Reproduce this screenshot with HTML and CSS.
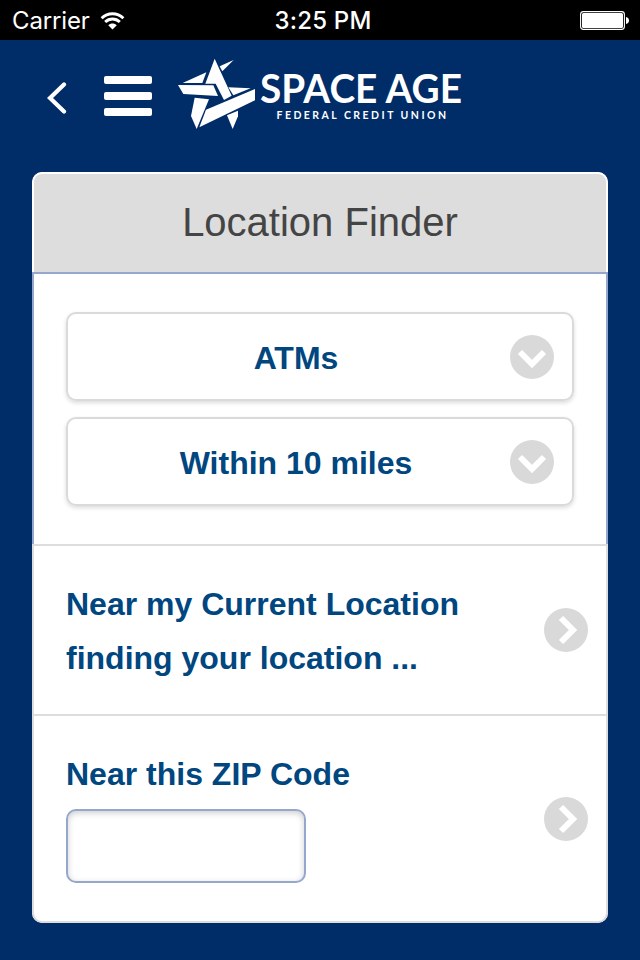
FILE: index.html
```html
<!DOCTYPE html>
<html lang="en">
<head>
<meta charset="utf-8">
<title>Location Finder</title>
<link rel="stylesheet" href="styles.css">
</head>
<body>
<div class="status">
  <div class="carrier"><span>Carrier</span>
    <svg class="wifi" width="25" height="20" viewBox="0 0 26 20" fill="none" stroke="#fff" stroke-width="3.1">
      <path d="M1.7 7.2C8.1 .9 17.9 .9 24.3 7.2M5.4 11.1C9.700 6.900 16.300 6.900 20.600 11.100"/>
      <path d="M8.600 14.300C11 12 15 12 17.400 14.300L13 18.800Z" fill="#fff" stroke="none"/>
    </svg>
  </div>
  <time class="clock">3:25 PM</time>
  <svg class="battery" width="50" height="20" viewBox="0 0 50 20">
    <rect x=".6" y=".6" width="43.8" height="17.8" rx="2.8" fill="none" stroke="#fff" stroke-width="1.1"/>
    <rect x="2" y="2" width="41" height="15" rx="1.5" fill="#fff"/>
    <path d="M46 6C50 6.500 50 12.500 46 13Z" fill="#fff"/>
  </svg>
</div>
<header class="topbar">
  <svg class="back" width="20" height="34" viewBox="0 0 20 34" fill="none" stroke="#fff" stroke-width="4.2" stroke-linecap="round"><path d="M17 3.500L3 17L17 30.500" stroke-linejoin="miter"/></svg>
  <div class="menu"><i></i><i></i><i></i></div>
  <svg class="logo" width="320" height="90" viewBox="0 0 320 90" fill="#fff">
    <g transform="scale(.33333)">
      <path d="M38 99L109 67L97 99Z"/>
      <path d="M24 105L130 106L144 138L40 132Z"/>
      <path d="M106 101L134 26L185 137L162 150L137 101Z"/>
      <path d="M149 49L191 30L157 64Z"/>
      <path d="M175 112L242 115L190 136Z"/>
      <path d="M74 143L117 148L80 237L63 198Z"/>
      <path d="M255 117V151L88 232L108 179Z"/>
      <path d="M171 196L204 182L204 199L188 237Z"/>
    </g>
    <text class="brand" x="90" y="53" textLength="202" lengthAdjust="spacingAndGlyphs">SPACE AGE</text>
    <text class="tagline" x="106.500" y="69" textLength="169.500">FEDERAL CREDIT UNION</text>
  </svg>
</header>
<main class="card">
  <h1 class="title">Location Finder</h1>
  <section class="filters">
    <div class="select"><span>ATMs</span>
      <svg class="disc" viewBox="0 0 44 44"><circle cx="22" cy="22" r="22"/><path d="M10 17L22 29L34 17"/></svg>
    </div>
    <div class="select"><span>Within 10 miles</span>
      <svg class="disc" viewBox="0 0 44 44"><circle cx="22" cy="22" r="22"/><path d="M10 17L22 29L34 17"/></svg>
    </div>
  </section>
  <section class="row near">
    <div class="label"><div>Near my Current Location</div><div>finding your location ...</div></div>
    <svg class="disc" viewBox="0 0 44 44"><circle cx="22" cy="22" r="22"/><path d="M17 10L29 22L17 34"/></svg>
  </section>
  <section class="row zip">
    <div class="label"><label for="zip">Near this ZIP Code</label><input id="zip" type="text"></div>
    <svg class="disc" viewBox="0 0 44 44"><circle cx="22" cy="22" r="22"/><path d="M17 10L29 22L17 34"/></svg>
  </section>
</main>
</body>
</html>
```
FILE: styles.css
```css
* { box-sizing: border-box; }
body {
  margin: 0;
  height: 960px;
  background: #002c68;
  font-family: "Liberation Sans", Arial, sans-serif;
  overflow: hidden;
}
svg { display: block; flex: none; }
.status {
  height: 40px;
  background: #000;
  color: #fff;
  display: grid;
  grid-template-columns: 1fr auto 1fr;
  align-items: center;
  padding: 2px 10px 0 12px;
  font: 24px/38px Inter, sans-serif;
}
.carrier { display: flex; align-items: center; gap: 10px; }
.carrier span { width: 78px; letter-spacing: -.15px; }
.clock { font-weight: 500; letter-spacing: .2px; position: relative; left: 2px; }
.battery { justify-self: end; }
.topbar { height: 132px; display: flex; padding-left: 47px; }
.back { margin-top: 41px; }
.menu {
  margin: 36px 0 0 37px;
  width: 48px;
  height: 40px;
  display: flex;
  flex-direction: column;
  gap: 8px;
}
.menu i { height: 8px; border-radius: 2px; background: #fff; }
.logo { margin: 10px 0 0 18px; }
.brand { font: 700 41px Lato, sans-serif; }
.tagline { font: 700 10.5px Lato, sans-serif; }
.card {
  margin: 0 32px;
  height: 751px;
  border-radius: 10px;
  background: #fff;
  overflow: hidden;
}
.title {
  margin: 0;
  height: 100px;
  border: 2px solid #fff;
  border-bottom: 0;
  border-radius: 10px 10px 0 0;
  background: #ddd;
  color: #444;
  font-size: 40px;
  font-weight: 400;
  line-height: 96px;
  text-align: center;
}
.filters {
  height: 272px;
  padding: 38px 32px 0;
  border: 2px solid #95a7cd;
  border-bottom: 0;
  display: flex;
  flex-direction: column;
  gap: 16px;
}
.select {
  height: 89px;
  display: flex;
  align-items: center;
  border: 2px solid #dadada;
  border-radius: 10px;
  padding: 0 18px 0 14px;
  box-shadow: 0 2px 4px rgba(0, 0, 0, .14);
}
.select span { flex: 1; text-align: center; padding-top: 3px; }
.select span, .label { color: #00467f; font-size: 32px; font-weight: 700; }
.disc { width: 44px; height: 44px; }
.disc circle { fill: #d9d9d9; }
.disc path { fill: none; stroke: #fff; stroke-width: 6; }
.row {
  border: 2px solid #ddd;
  border-bottom: 0;
  display: flex;
  align-items: center;
  justify-content: space-between;
  padding: 0 18px 0 32px;
}
.near { height: 170px; }
.near .label { padding-top: 2px; }
.label { line-height: 54px; }
.zip { height: 209px; border-bottom: 2px solid #ddd; border-radius: 0 0 10px 10px; }
.zip .label { padding-bottom: 8px; }
.zip label { display: block; line-height: 54px; }
.zip input {
  display: block;
  width: 240px;
  height: 74px;
  margin: 8px 0 0;
  border: 2px solid #95a7cd;
  border-radius: 10px;
  background: #fff;
  box-shadow: inset 0 2px 6px rgba(0, 0, 0, .2);
  font-size: 32px;
  padding: 0 12px;
}
```
